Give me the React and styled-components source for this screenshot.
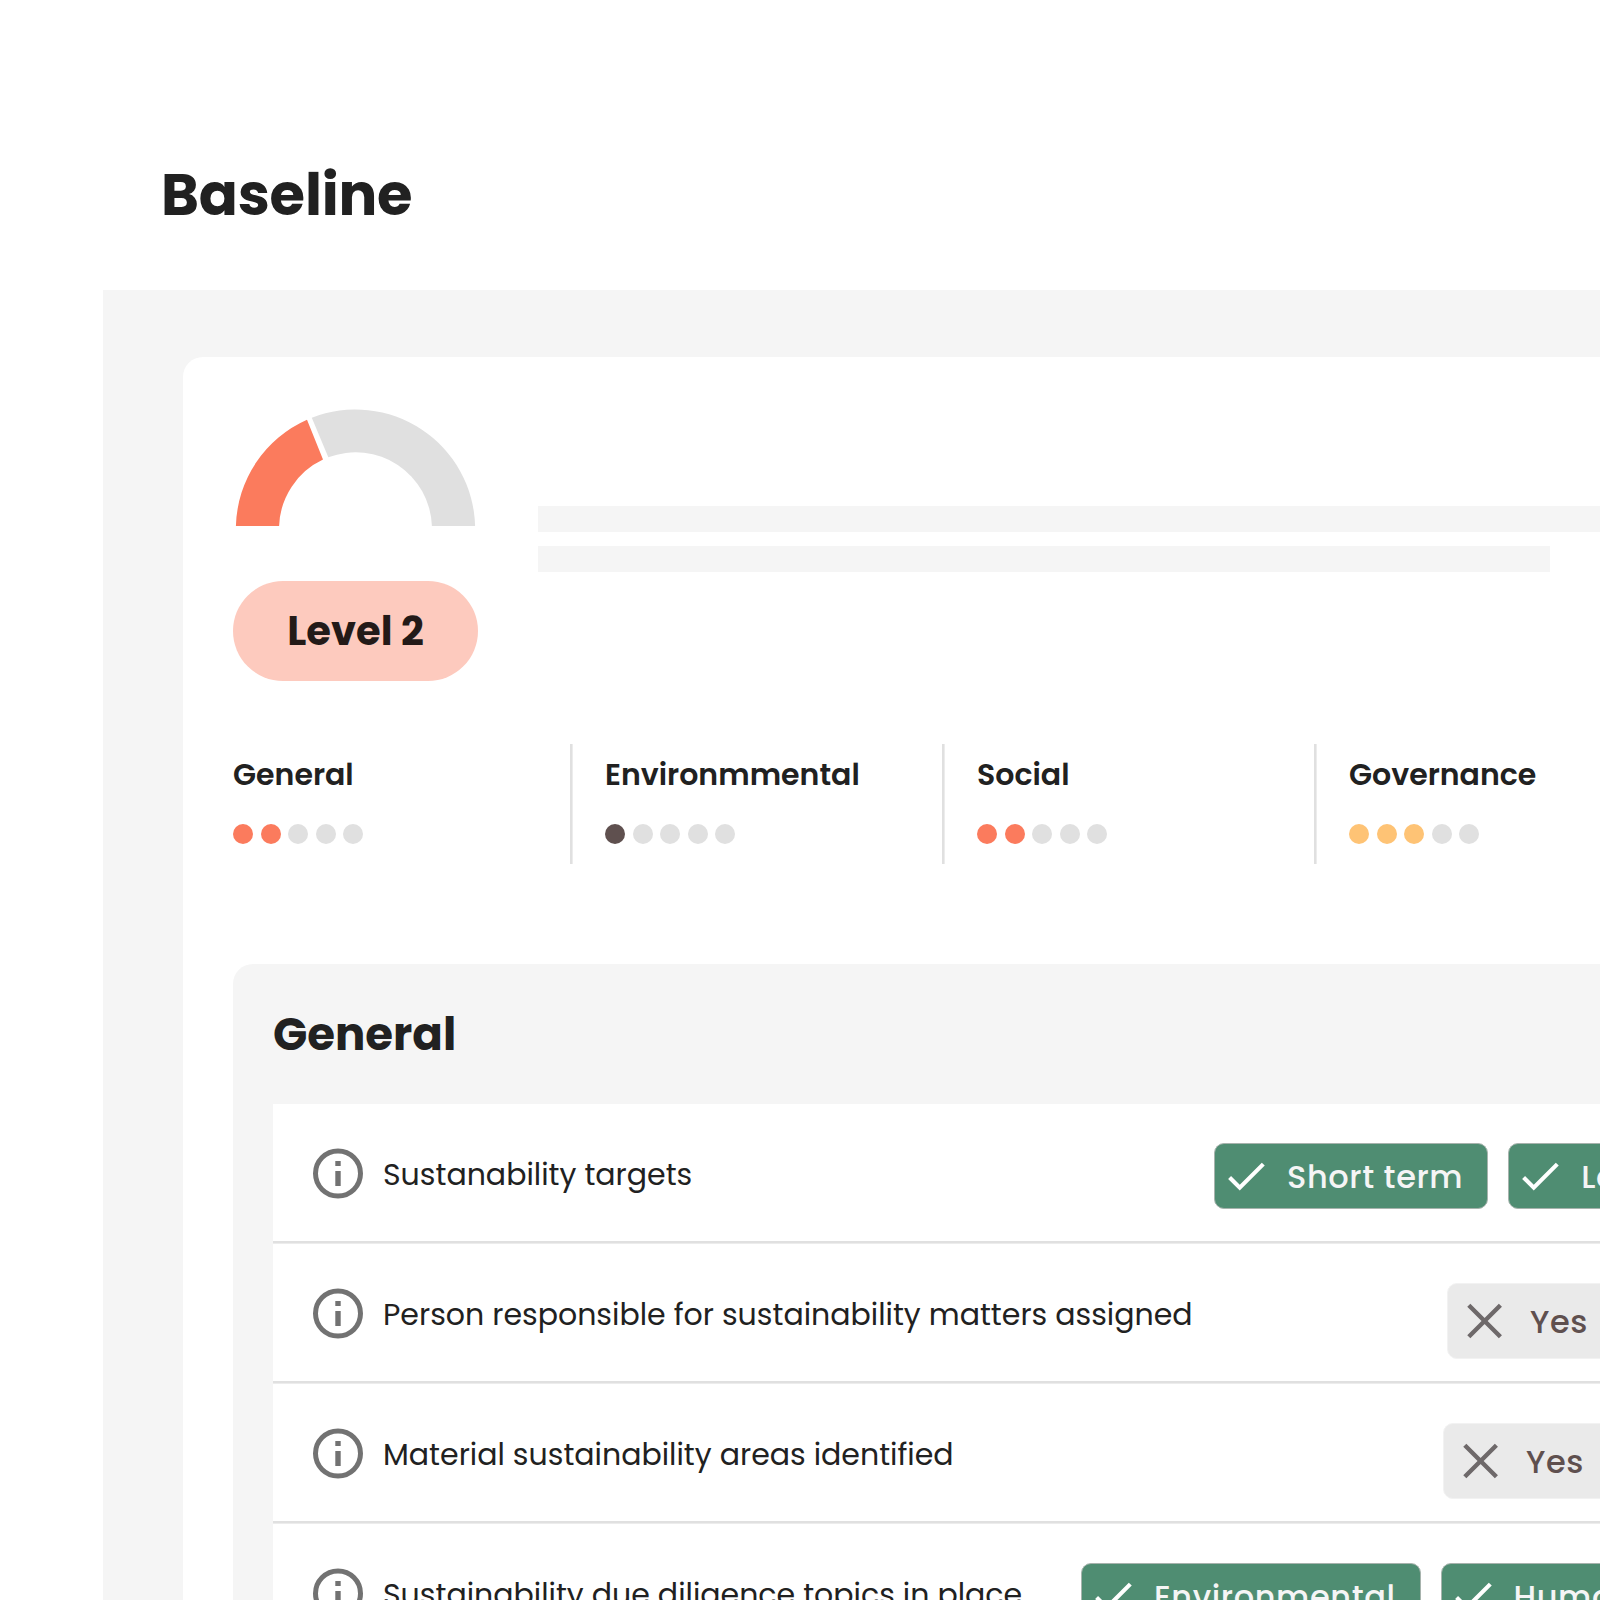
import React from 'react';
import styled, { createGlobalStyle } from 'styled-components';

const GlobalStyle = createGlobalStyle`
    * {
        box-sizing: border-box;
    }

    body {
        margin: 0;
        background-color: #ffffff;
        color: #212121;
        font-family: Poppins, Inter, sans-serif;
    }
`;

const Page = styled.div`
    display: flex;
    flex-direction: column;
    width: 100%;
    height: 100vh;
    padding-left: 103px;
    overflow: hidden;
`;

const Header = styled.header`
    flex: none;
    height: 290px;
    padding: 152px 0 0 58px;
`;

const Title = styled.h1`
    margin: 0;
    font-size: 57.6px;
    line-height: 87px;
    font-weight: 700;
    letter-spacing: -0.2px;
`;

const Main = styled.main`
    flex: 1;
    min-height: 0;
    padding: 67px 0 0 80px;
    background-color: #f5f5f5;
`;

const Card = styled.div`
    padding: 52px 0 0 50px;
    border-top-left-radius: 20px;
    background-color: #ffffff;
`;

const Summary = styled.section`
    display: flex;
    gap: 60px;
`;

const Score = styled.div`
    display: flex;
    flex: none;
    flex-direction: column;
    gap: 55px;
    width: 245px;
`;

const GaugeSvg = styled.svg`
    display: block;
`;

const LevelBadge = styled.div`
    height: 100px;
    border-radius: 50px;
    background-color: #fdcabe;
    color: #231a18;
    font-size: 40px;
    line-height: 100px;
    font-weight: 700;
    text-align: center;
`;

const Placeholder = styled.div`
    display: flex;
    flex: 1;
    flex-direction: column;
    gap: 14px;
    padding-top: 97px;
`;

const Line = styled.div`
    width: ${props => props.$width};
    height: 26px;
    background-color: #f5f5f5;
`;

const Categories = styled.section`
    display: flex;
    margin-top: 63px;
`;

const Category = styled.div`
    flex: none;
    width: 372px;
    height: 120px;
    padding: 8px 0 0 35px;
    box-shadow: inset 2px 0 #e0e0e0, inset 3px 0 #ececec;

    &:first-child {
        width: 337px;
        padding-left: 0;
        box-shadow: none;
    }
`;

const CategoryName = styled.div`
    font-size: 30px;
    line-height: 45px;
    font-weight: 600;
`;

const Dots = styled.div`
    display: flex;
    gap: 7.5px;
    margin-top: 27px;
`;

const Dot = styled.span`
    width: 20px;
    height: 20px;
    border-radius: 50%;
    background-color: ${props => props.$color};
`;

const Panel = styled.section`
    margin-top: 100px;
    padding: 37px 0 0 40px;
    border-top-left-radius: 20px;
    background-color: #f5f5f5;
`;

const PanelTitle = styled.h2`
    margin: 0 0 36px;
    font-size: 45px;
    line-height: 67px;
    font-weight: 700;
`;

const Table = styled.div`
    background-color: #ffffff;
`;

const Row = styled.div`
    display: flex;
    align-items: center;
    height: 140px;
    padding-left: 40px;
    box-shadow: inset 0 -1px #ececec, inset 0 -3px #e0e0e0;
`;

const InfoSvg = styled.svg`
    flex: none;
    overflow: visible;
`;

const Label = styled.div`
    flex: none;
    width: ${props => props.$width}px;
    margin-left: 20px;
    padding-top: 1px;
    font-size: 30px;
    line-height: 45px;
    white-space: nowrap;
`;

const Tags = styled.div`
    display: flex;
    flex: none;
    align-self: flex-start;
    gap: 20px;
    margin-top: 39px;
`;

const Tag = styled.div`
    display: flex;
    flex: none;
    align-items: center;
    gap: ${props => (props.$checked ? '16px' : '20px')};
    height: ${props => (props.$checked ? '66px' : '76px')};
    padding: ${props => (props.$checked ? '0 24px 0 6px' : '0 30px 0 12px')};
    border: 1px solid ${props => (props.$checked ? '#a7b3ad' : '#f2f2f2')};
    border-radius: 10px;
    background-color: ${props => (props.$checked ? '#4f8d72' : '#eaeaea')};
    color: ${props => (props.$checked ? '#f5f5f5' : '#5f504f')};
`;

const TagText = styled.span`
    padding-top: 2px;
    font-size: 32px;
    line-height: 48px;
    font-weight: 500;
    letter-spacing: 0.6px;
    white-space: nowrap;
`;

const categories = [
    { name: 'General', level: 2, color: '#fb7b5d' },
    { name: 'Environmmental', level: 1, color: '#5f504f' },
    { name: 'Social', level: 2, color: '#fb7b5d' },
    { name: 'Governance', level: 3, color: '#fec375' },
];

const rows = [
    { label: 'Sustanability targets', width: 831, checked: true, tags: ['Short term', 'Long term'] },
    { label: 'Person responsible for sustainability matters assigned', width: 1064, checked: false, tags: ['Yes'] },
    { label: 'Material sustainability areas identified', width: 1060, checked: false, tags: ['Yes'] },
    { label: 'Sustainability due diligence topics in place', width: 698, checked: true, tags: ['Environmental', 'Human rights'] },
];

const Gauge = () => (
    <GaugeSvg width="245" height="117" viewBox="0 0 245 117">
        <path d="M2.9 117A119.6 119.6 0 0 1 74 10.8L90 50.6A76.4 76.4 0 0 0 46.1 117Z" fill="#fb7b5d" />
        <path d="M78.8 8.8A119.6 119.6 0 0 1 242.1 117H198.9A76.4 76.4 0 0 0 95.3 48.3Z" fill="#e0e0e0" />
    </GaugeSvg>
);

const InfoIcon = () => (
    <InfoSvg width="50" height="50" viewBox="0 0 50 50" fill="#727272">
        <circle cx="25" cy="24.5" r="22.5" fill="none" stroke="#727272" strokeWidth="5" />
        <rect x="22.3" y="12" width="5.4" height="5" />
        <rect x="22.3" y="22" width="5.4" height="15" />
    </InfoSvg>
);

const CheckIcon = () => (
    <svg width="50" height="50" viewBox="0 0 24 24" fill="#ffffff">
        <path d="M9 16.17L4.83 12l-1.42 1.41L9 19 21 7l-1.41-1.41z" />
    </svg>
);

const CloseIcon = () => (
    <svg width="50" height="50" viewBox="0 0 50 50" stroke="#6e696a" strokeWidth="4.4">
        <path d="M8.8 9.2L40.4 40.8M40.4 9.2L8.8 40.8" />
    </svg>
);

const App = () => {
    const categoryList = categories.map(item => (
        <Category key={item.name}>
            <CategoryName>{item.name}</CategoryName>
            <Dots>
                {[1, 2, 3, 4, 5].map(num => (
                    <Dot key={num} $color={num <= item.level ? item.color : '#e0e0e0'} />
                ))}
            </Dots>
        </Category>
    ));

    const rowList = rows.map(row => (
        <Row key={row.label}>
            <InfoIcon />
            <Label $width={row.width}>{row.label}</Label>
            <Tags>
                {row.tags.map(tag => (
                    <Tag key={tag} $checked={row.checked}>
                        {row.checked ? <CheckIcon /> : <CloseIcon />}
                        <TagText>{tag}</TagText>
                    </Tag>
                ))}
            </Tags>
        </Row>
    ));

    return (
        <Page>
            <GlobalStyle />
            <Header>
                <Title>Baseline</Title>
            </Header>
            <Main>
                <Card>
                    <Summary>
                        <Score>
                            <Gauge />
                            <LevelBadge>Level 2</LevelBadge>
                        </Score>
                        <Placeholder>
                            <Line $width="100%" />
                            <Line $width="1012px" />
                        </Placeholder>
                    </Summary>
                    <Categories>{categoryList}</Categories>
                    <Panel>
                        <PanelTitle>General</PanelTitle>
                        <Table>{rowList}</Table>
                    </Panel>
                </Card>
            </Main>
        </Page>
    );
};

export default App;
